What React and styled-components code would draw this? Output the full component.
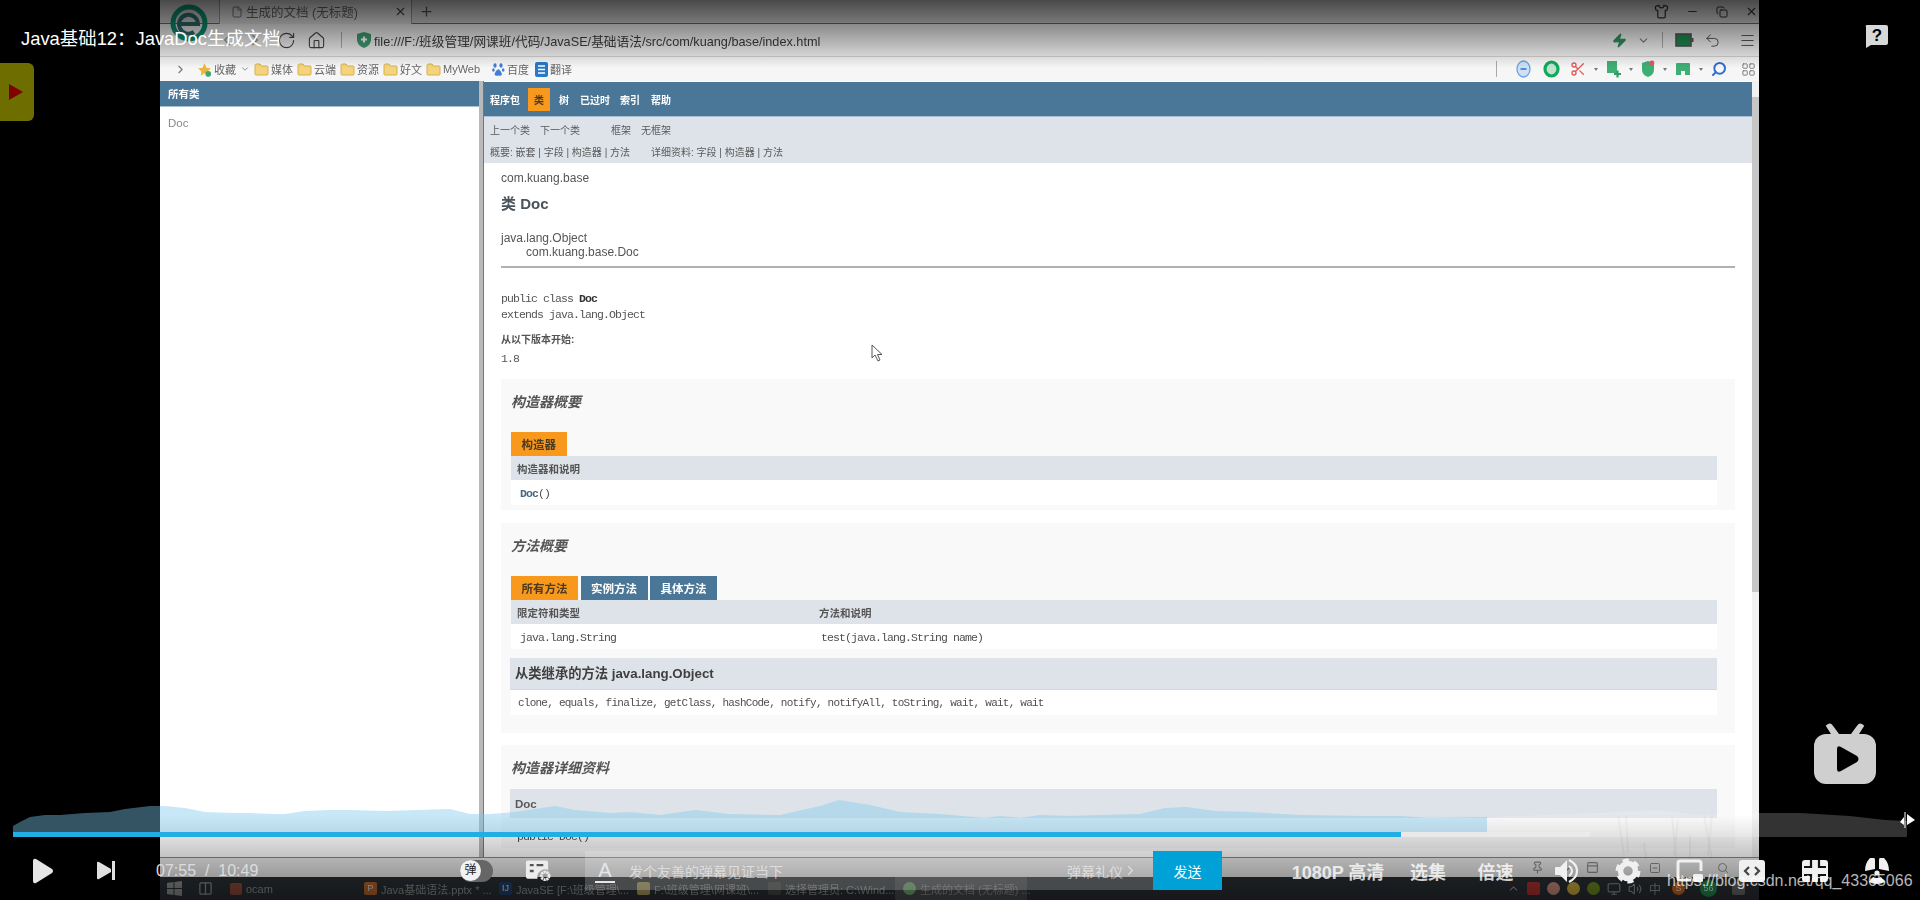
import React from 'react';
import styled, { createGlobalStyle } from 'styled-components';
import {
  File, X, Plus, RotateCw, Home, ChevronDown, ChevronLeft, ChevronRight, ChevronUp, Shirt, Minus, Copy, Zap,
  Undo2, Menu, Scissors, Search, LayoutGrid, Pin, ArrowDown, PanelTop, SquareMinus, Columns2, Volume2, Monitor,
} from 'lucide-react';

const SANS = `'Liberation Sans', 'Noto Sans CJK SC', sans-serif`;
const MONO = `'Liberation Mono', 'Noto Sans CJK SC', monospace`;

const GlobalStyle = createGlobalStyle`
  html, body { margin: 0; padding: 0; background: #000; }
  #root { width: 1920px; height: 900px; }
`;

const Page = styled.div`
  position: relative;
  width: 1920px;
  height: 900px;
  background: #000;
  overflow: hidden;
  font-family: ${SANS};
`;

const Video = styled.div`
  position: relative;
  width: 1599px;
  height: 900px;
  margin-left: 160px;
  display: flex;
  flex-direction: column;
  overflow: hidden;
  background: #fff;
  filter: blur(0.45px);
`;

const TabBar = styled.div`
  height: 24px;
  flex: none;
  display: flex;
  align-items: center;
  padding-left: 59px;
  background: #d6d6d6;
  border-bottom: 1px solid #6c6c6c;
  box-sizing: border-box;
`;

const BrowserTab = styled.div`
  width: 193px;
  height: 24px;
  box-sizing: border-box;
  display: flex;
  align-items: center;
  padding-left: 11px;
  color: #666;
  font-size: 12.5px;
  border-left: 1px solid #999;
  border-right: 1px solid #999;
  background: #e6e6e6;
  gap: 3px;
  white-space: nowrap;
  svg:last-child { margin-left: auto; margin-right: 4px; }
`;

const WindowButtons = styled.div`
  margin-left: auto;
  margin-right: 1px;
  display: flex;
  align-items: center;
  gap: 17px;
  color: #333;
`;

const AddressBar = styled.div`
  height: 32px;
  flex: none;
  display: flex;
  align-items: center;
  padding-left: 58px;
  background: #f0f0f0;
  color: #444;
`;

const UrlText = styled.span`
  margin-left: 3px;
  font-size: 12.7px;
  color: #3c3c3c;
  white-space: nowrap;
`;

const ToolDivider = styled.span`
  display: block;
  width: 1px;
  height: 16px;
  margin: 0 ${p => p.$space || 14}px;
  background: #aaa;
`;

const ToolGroup = styled.div`
  margin-left: auto;
  margin-right: 3px;
  display: flex;
  align-items: center;
  gap: ${p => p.$gap || 8}px;
`;

const ToolSlot = styled.span`
  display: flex;
  align-items: center;
  margin-left: ${p => p.$ml || 0}px;
`;

const Caret = styled.span`
  width: 0;
  height: 0;
  border-style: solid;
  border-width: 3px 2px 0 2px;
  border-color: #777 transparent transparent transparent;
`;

const BookmarkBar = styled.div`
  height: 25px;
  flex: none;
  display: flex;
  align-items: center;
  gap: 4px;
  padding-left: 14px;
  box-sizing: border-box;
  background: #f6f6f6;
  border-top: 1px solid #d0d0d0;
`;

const Bookmark = styled.span`
  display: flex;
  align-items: center;
  gap: 2px;
  font-size: 11px;
  color: #666;
  white-space: nowrap;
  margin-left: ${p => p.$ml || 0}px;
`;

const Frames = styled.div`
  flex: 1;
  min-height: 0;
  display: flex;
  background: #fff;
`;

const ListPane = styled.div`
  width: 319px;
  flex: none;
`;

const ListHeader = styled.div`
  height: 26px;
  box-sizing: border-box;
  padding-left: 8px;
  display: flex;
  align-items: center;
  background: #4a7698;
  border-bottom: 1px solid #a9c0d2;
  color: #fff;
  font-size: 10.5px;
  font-weight: 700;
`;

const ListItem = styled.div`
  padding: 10px 0 0 8px;
  font-size: 11.5px;
  color: #888;
`;

const Splitter = styled.div`
  width: 5px;
  flex: none;
  background: #b9b9b9;
  border-right: 1px solid #777;
  box-sizing: border-box;
`;

const ClassPane = styled.div`
  flex: 1;
  min-width: 0;
  display: flex;
  flex-direction: column;
  overflow: hidden;
  padding-top: 1px;
`;

const NavBar = styled.div`
  height: 35px;
  flex: none;
  display: flex;
  align-items: center;
  padding-left: 6px;
  background: #4a7698;
  border-bottom: 1px solid #a9c0d2;
  box-sizing: border-box;
  font-size: 10px;
  color: #fff;
  font-weight: 700;
`;

const NavItem = styled.span`
  height: 23px;
  display: flex;
  align-items: center;
  justify-content: center;
  margin-right: ${p => p.$mr}px;
  padding: 0 ${p => (p.$active ? 6 : 0)}px;
  background: ${p => (p.$active ? '#f8981d' : 'transparent')};
  color: ${p => (p.$active ? '#4a3a20' : '#fff')};
`;

const SubNav = styled.div`
  height: 46px;
  flex: none;
  padding: 1px 0 0 6px;
  box-sizing: border-box;
  background: #dee3e9;
  font-size: 10px;
  color: #5a5a5a;
`;

const SubLine = styled.div`
  height: 22px;
  display: flex;
  align-items: center;
  white-space: nowrap;
  span { margin-right: ${p => p.$gap}px; }
`;

const Content = styled.div`
  padding: 0 17px;
  color: #555;
`;

const PackageLabel = styled.div`
  margin-top: 7px;
  font-size: 12px;
  line-height: 16px;
`;

const ClassTitle = styled.div`
  margin-top: 8px;
  font-size: 15px;
  line-height: 20px;
  font-weight: 700;
  color: #4a545c;
`;

const InheritLine = styled.div`
  font-size: 12px;
  line-height: 14px;
  margin-top: ${p => p.$mt || 0}px;
  padding-left: ${p => p.$indent || 0}px;
`;

const Rule = styled.div`
  margin-top: 7px;
  height: 2px;
  background: #b0b0b0;
`;

const Signature = styled.div`
  margin-top: 23px;
  font-family: ${MONO};
  font-size: 11.5px;
  letter-spacing: -0.9px;
  line-height: 16px;
  b { color: #333; }
`;

const SinceLabel = styled.div`
  margin-top: 9px;
  font-size: 10px;
  line-height: 16px;
  font-weight: 700;
  color: #555;
`;

const SinceValue = styled.div`
  margin-top: 3px;
  font-family: ${MONO};
  font-size: 11.5px;
  letter-spacing: -0.9px;
  line-height: 16px;
`;

const Section = styled.div`
  margin-top: ${p => p.$mt}px;
  padding: 13px 18px 5px 10px;
  background: #f9f9f9;
`;

const SectionTitle = styled.div`
  height: 20px;
  font-size: 14px;
  line-height: 20px;
  font-style: italic;
  font-weight: 700;
  color: #555;
`;

const TabRow = styled.div`
  display: flex;
  gap: 2.5px;
  margin-top: 20px;
`;

const TableTab = styled.div`
  height: 24px;
  padding: 0 10.5px;
  display: flex;
  align-items: center;
  font-size: 11.5px;
  font-weight: 700;
  background: ${p => (p.$active ? '#f8981d' : '#4a7698')};
  color: ${p => (p.$active ? '#4a3a20' : '#fff')};
`;

const TableHead = styled.div`
  height: 24px;
  padding: 1px 0 0 6px;
  box-sizing: border-box;
  display: grid;
  grid-template-columns: 302px 1fr;
  align-items: center;
  background: #dee3e9;
  font-size: 10.5px;
  font-weight: 700;
  color: #555;
`;

const TableRow = styled.div`
  height: 25px;
  padding: 2px 0 0 9px;
  box-sizing: border-box;
  display: grid;
  grid-template-columns: 301px 1fr;
  align-items: center;
  background: #fff;
  font-family: ${MONO};
  font-size: 11.5px;
  letter-spacing: -0.9px;
  color: #4f4f4f;
  b { color: #4a6782; }
`;

const InheritedHead = styled.div`
  height: 32px;
  margin: 9px 0 0 -1px;
  padding: 0 0 2px 5px;
  display: flex;
  align-items: center;
  background: #dee3e9;
  border-bottom: 1px solid #d0d9e0;
  box-sizing: border-box;
  font-size: 13.3px;
  font-weight: 700;
  color: #3f3f3f;
`;

const InheritedRow = styled.div`
  height: 25px;
  margin-bottom: 13px;
  padding-left: 7px;
  display: flex;
  align-items: center;
  background: #fff;
  font-family: ${MONO};
  font-size: 11px;
  letter-spacing: -0.76px;
  white-space: pre;
  color: #4f4f4f;
`;

const DetailHead = styled.div`
  height: 29px;
  margin: 11px 0 0 -1px;
  padding-left: 5px;
  display: flex;
  align-items: center;
  background: #dee3e9;
  font-size: 11.5px;
  font-weight: 700;
  color: #5a5a5a;
`;

const DetailCode = styled.div`
  margin-top: 12px;
  padding-left: 6px;
  font-family: ${MONO};
  font-size: 11.5px;
  letter-spacing: -0.9px;
  color: #4f4f4f;
`;

const ScrollTrack = styled.div`
  width: 7px;
  flex: none;
  background: #f1f1f1;
  display: flex;
  flex-direction: column;
`;

const ScrollThumb = styled.div`
  margin-top: 16px;
  height: 495px;
  background: #c6c6c6;
`;

const StatusBar = styled.div`
  height: 20px;
  flex: none;
  display: flex;
  align-items: center;
  justify-content: flex-end;
  gap: 14px;
  padding-right: 30px;
  background: #ededed;
  border-top: 1px solid #8a8a8a;
  box-sizing: border-box;
  color: #8c8c8c;
`;

const Taskbar = styled.div`
  height: 23px;
  flex: none;
  display: flex;
  align-items: center;
  background: #2a2f33;
  color: #8d8d8d;
  font-size: 11px;
  position: relative;
`;

const TaskItem = styled.div`
  width: ${p => p.$w}px;
  height: 23px;
  flex: none;
  display: flex;
  align-items: center;
  gap: 4px;
  padding-left: ${p => p.$pl || 0}px;
  box-sizing: border-box;
  white-space: nowrap;
  background: ${p => (p.$active ? 'rgba(255,255,255,0.13)' : 'transparent')};
`;

const TaskIcon = styled.span`
  width: ${p => p.$size || 13}px;
  height: ${p => p.$size || 13}px;
  flex: none;
  display: flex;
  align-items: center;
  justify-content: center;
  margin-left: ${p => p.$ml || 0}px;
  font-size: 9px;
  line-height: 1;
  color: #ddd;
  border-radius: ${p => (p.$round ? '50%' : '2px')};
  background: ${p => p.$color};
`;

const Tray = styled.div`
  margin-left: auto;
  margin-right: 14px;
  display: flex;
  align-items: center;
  gap: 7px;
  font-size: 12px;
`;

const LogoMark = styled.svg`
  position: absolute;
  left: 10px;
  top: 4px;
  width: 38px;
  height: 46px;
`;

const MouseCursor = styled.svg`
  position: absolute;
  left: 711px;
  top: 344px;
`;

const Streaks = styled.svg`
  position: absolute;
  left: 1440px;
  top: 815px;
`;

const TopShade = styled.div`
  position: absolute;
  left: 0;
  top: 0;
  width: 100%;
  height: 68px;
  background: linear-gradient(to bottom, rgba(0,0,0,0.66), rgba(0,0,0,0));
  pointer-events: none;
`;

const BottomShade = styled.div`
  position: absolute;
  left: 0;
  bottom: 0;
  width: 100%;
  height: 85px;
  background: linear-gradient(to bottom, rgba(0,0,0,0), rgba(0,0,0,0.48));
  pointer-events: none;
`;

const VideoTitle = styled.div`
  position: absolute;
  left: 21px;
  top: 27px;
  font-size: 18.4px;
  line-height: 24px;
  color: #fff;
  white-space: nowrap;
`;

const SideTab = styled.div`
  position: absolute;
  left: 0;
  top: 63px;
  width: 34px;
  height: 58px;
  display: flex;
  align-items: center;
  justify-content: center;
  background: #6e6e00;
  border-radius: 0 6px 6px 0;
`;

const SideArrow = styled.span`
  width: 0;
  height: 0;
  margin-left: -3px;
  border-style: solid;
  border-width: 8px 0 8px 14px;
  border-color: transparent transparent transparent #800000;
`;

const HelpBadge = styled.svg`
  position: absolute;
  left: 1864px;
  top: 24px;
`;

const TvLogo = styled.svg`
  position: absolute;
  left: 1813px;
  top: 723px;
`;

const Wave = styled.svg`
  position: absolute;
  left: 0;
  top: 790px;
`;

const ProgressTrack = styled.div`
  position: absolute;
  left: 13px;
  top: 832px;
  width: 1577px;
  height: 5px;
  background: rgba(235, 235, 235, 0.85);
`;

const ProgressFill = styled.div`
  height: 100%;
  background: #23ade5;
`;

const Controls = styled.div`
  position: absolute;
  left: 0;
  top: 851px;
  width: 1920px;
  height: 39px;
  display: flex;
  align-items: center;
`;

const Control = styled.div`
  width: ${p => p.$w}px;
  flex: none;
  margin-left: ${p => p.$ml}px;
  display: flex;
  align-items: center;
  justify-content: center;
  white-space: nowrap;
  color: #e4e4e4;
`;

const TimeLabel = styled.span`
  margin-left: 41px;
  width: 98px;
  flex: none;
  font-size: 16px;
  color: #dcdcdc;
  white-space: pre;
`;

const DanmakuToggle = styled.div`
  margin-left: 206px;
  width: 33px;
  height: 22px;
  flex: none;
  border-radius: 11px;
  background: #666;
  display: flex;
  align-items: center;
`;

const ToggleKnob = styled.span`
  width: 21px;
  height: 21px;
  border-radius: 50%;
  background: #f2f2f2;
  color: #222;
  font-size: 12px;
  line-height: 21px;
  text-align: center;
`;

const DanmakuInput = styled.div`
  margin-left: 34px;
  width: 568px;
  height: 39px;
  flex: none;
  box-sizing: border-box;
  padding: 0 15px 0 10px;
  display: flex;
  align-items: center;
  background: rgba(255, 255, 255, 0.2);
  color: rgba(255, 255, 255, 0.55);
  font-size: 14px;
`;

const FontMark = styled.span`
  width: 20px;
  margin-right: 14px;
  border-bottom: 2px solid #e6e6e6;
  color: #e6e6e6;
  font-size: 20px;
  line-height: 22px;
  text-align: center;
`;

const EtiquetteLink = styled.span`
  margin-left: auto;
  display: flex;
  align-items: center;
`;

const SendButton = styled.div`
  width: 69px;
  height: 39px;
  flex: none;
  display: flex;
  align-items: center;
  justify-content: center;
  background: #00a1d6;
  color: #fff;
  font-size: 14px;
`;

const QualityText = styled.span`
  font-size: 18px;
  font-weight: 700;
  color: rgba(255, 255, 255, 0.8);
`;

const Watermark = styled.div`
  position: absolute;
  left: 1667px;
  top: 871px;
  font-size: 16px;
  line-height: 20px;
  color: rgba(255, 255, 255, 0.72);
  white-space: nowrap;
`;

const Folder = () => (
  <svg width="15" height="13" viewBox="0 0 15 13">
    <path d="M1 2.5 Q1 1 2.5 1 H6 L7.5 3 H13 Q14 3 14 4 V11 Q14 12 13 12 H2 Q1 12 1 11 Z" fill="#f3d47c" stroke="#d8b04e" />
  </svg>
);

const WAVE_TOP = [
  [13, 826], [20, 822], [30, 817], [45, 815], [60, 815], [85, 813], [110, 812], [125, 809], [150, 806], [165, 806],
  [185, 808], [205, 812], [235, 813], [250, 813], [275, 814], [285, 814], [305, 811], [330, 810], [350, 810], [385, 811],
  [450, 809], [470, 814], [490, 814], [515, 812], [555, 806], [575, 810], [610, 813], [630, 812], [660, 815], [695, 810],
  [730, 814], [780, 815], [820, 806], [839, 800], [870, 805], [900, 812], [940, 814], [985, 818], [1000, 816], [1020, 818],
  [1040, 815], [1070, 816], [1100, 815], [1140, 814], [1165, 808], [1186, 807], [1215, 811], [1250, 812], [1300, 815],
  [1360, 816], [1401, 816], [1430, 818], [1487, 817],
];
const WAVE_REST = [
  [1487, 817], [1600, 813], [1658, 810], [1700, 815], [1760, 813], [1800, 813], [1850, 816], [1885, 820], [1907, 821],
];
const toPoints = (top, floor) => {
  const last = top[top.length - 1][0];
  const first = top[0][0];
  return [[first, floor], ...top, [last, floor]].map(([x, y]) => `${x},${y - 790}`).join(' ');
};

const TASKS = [
  { w: 135, color: '#b5652a', mark: 'P', label: 'Java基础语法.pptx * ...' },
  { w: 138, color: '#20406e', mark: 'IJ', label: 'JavaSE [F:\\班级管理\\...' },
  { w: 131, color: '#a89a5c', mark: '', label: 'F:\\班级管理\\网课班\\...' },
  { w: 127, color: '#444', mark: '', label: '选择管理员: C:\\Wind...' },
];

export default function App() {
  return (
    <Page>
      <GlobalStyle />
      <Video>
        <TabBar>
          <BrowserTab>
            <File size={12} color="#777" />
            生成的文档 (无标题)
            <X size={13} color="#444" />
          </BrowserTab>
          <Plus size={15} color="#555" style={{ marginLeft: 7 }} />
          <WindowButtons>
            <Shirt size={15} />
            <Minus size={13} />
            <Copy size={12} />
            <X size={13} />
          </WindowButtons>
        </TabBar>
        <AddressBar>
          <ChevronLeft size={18} color="#999" />
          <ChevronRight size={18} color="#999" style={{ marginLeft: 10 }} />
          <RotateCw size={19} strokeWidth={1.4} style={{ marginLeft: 13 }} />
          <Home size={19} strokeWidth={1.4} style={{ marginLeft: 11 }} />
          <ToolDivider $space={15} />
          <svg width="14" height="16" viewBox="0 0 14 16">
            <path d="M7 0 L14 2 V8 Q14 13 7 16 Q0 13 0 8 V2 Z" fill="#3f9c72" />
            <path d="M4 7.5 H10 M7 4.5 V10.5" stroke="#fff" strokeWidth="2" />
          </svg>
          <UrlText>file:///F:/班级管理/网课班/代码/JavaSE/基础语法/src/com/kuang/base/index.html</UrlText>
          <ToolGroup $gap={10}>
            <Zap size={15} color="#2f8f5f" fill="#2f8f5f" />
            <ChevronDown size={13} color="#777" />
            <ToolDivider $space={2} />
            <svg width="19" height="14" viewBox="0 0 19 14">
              <rect x="1" y="1" width="15" height="12" fill="#1c8a4c" stroke="#555" strokeWidth="1.6" />
              <rect x="16.5" y="5" width="2" height="4" fill="#555" />
            </svg>
            <Undo2 size={17} color="#555" strokeWidth={1.4} />
            <ToolSlot $ml={8}>
              <Menu size={17} color="#555" strokeWidth={1.4} />
            </ToolSlot>
          </ToolGroup>
        </AddressBar>
        <BookmarkBar>
          <ChevronRight size={13} color="#777" />
          <Bookmark $ml={6}>
            <svg width="15" height="15" viewBox="0 0 24 24">
              <path d="M12 2 L15 9 L22 10 L17 15 L18 22 L12 18 L6 22 L7 15 L2 10 L9 9 Z" fill="#e8b93c" />
              <circle cx="18" cy="19" r="4.5" fill="#42a66b" />
            </svg>
            收藏
            <ChevronDown size={10} color="#777" style={{ marginLeft: 2 }} />
          </Bookmark>
          <Bookmark><Folder />媒体</Bookmark>
          <Bookmark><Folder />云端</Bookmark>
          <Bookmark><Folder />资源</Bookmark>
          <Bookmark><Folder />好文</Bookmark>
          <Bookmark><Folder />MyWeb</Bookmark>
          <Bookmark $ml={8}>
            <svg width="13" height="15" viewBox="0 0 13 15" fill="#3f7fd6">
              <ellipse cx="3" cy="3.5" rx="1.6" ry="2.3" />
              <ellipse cx="9" cy="3.5" rx="1.6" ry="2.3" />
              <ellipse cx="1.4" cy="8" rx="1.3" ry="1.8" />
              <ellipse cx="11.2" cy="8" rx="1.3" ry="1.8" />
              <path d="M6.3 7 Q9.5 9 10 12 Q10 14.5 6.3 13.5 Q2.5 14.5 2.5 12 Q3 9 6.3 7 Z" />
            </svg>
            百度
          </Bookmark>
          <Bookmark $ml={2}>
            <svg width="13" height="15" viewBox="0 0 13 15">
              <rect width="13" height="15" rx="2" fill="#2a78c8" />
              <path d="M3 4 H10 M3 7.5 H10 M3 11 H10" stroke="#fff" strokeWidth="1.3" />
            </svg>
            翻译
          </Bookmark>
          <ToolGroup $gap={8}>
            <ToolDivider $space={5} />
            <ToolSlot $ml={6}>
              <svg width="15" height="18" viewBox="0 0 15 18">
                <ellipse cx="7.5" cy="9" rx="6.5" ry="8" fill="#cfe0f5" stroke="#6ba4e0" strokeWidth="1.3" />
                <path d="M4.5 9 H10.5" stroke="#4f8fd8" strokeWidth="2" />
              </svg>
            </ToolSlot>
            <ToolSlot $ml={4}>
              <svg width="17" height="18" viewBox="0 0 17 18">
                <ellipse cx="8.5" cy="9" rx="6.5" ry="7" fill="#bfe3cf" stroke="#12a85e" strokeWidth="3.2" />
              </svg>
            </ToolSlot>
            <ToolSlot $ml={2}>
              <Scissors size={16} color="#e25b5b" />
            </ToolSlot>
            <Caret />
            <svg width="15" height="18" viewBox="0 0 15 18">
              <rect x="1" y="1" width="10" height="12" fill="#3fae74" />
              <path d="M8 14 H15 M11.5 10.5 V17.5" stroke="#2e9e64" strokeWidth="2.2" />
            </svg>
            <Caret />
            <svg width="14" height="18" viewBox="0 0 14 18">
              <path d="M1 3 L7 1 L13 3 V10 Q13 15 7 17 Q1 15 1 10 Z" fill="#3fae74" />
              <circle cx="11" cy="3" r="2.4" fill="#e25b5b" />
            </svg>
            <Caret />
            <svg width="16" height="16" viewBox="0 0 16 16">
              <path d="M2 2 H14 Q15 2 15 3 V14 H10 V10 H6 V14 H1 V3 Q1 2 2 2 Z" fill="#3fae74" />
            </svg>
            <Caret />
            <Search size={16} color="#2f6fd0" strokeWidth={3} style={{ transform: 'scaleX(-1)' }} />
            <ToolSlot $ml={6}>
              <LayoutGrid size={15} color="#777" strokeWidth={1.5} />
            </ToolSlot>
          </ToolGroup>
        </BookmarkBar>
        <Frames>
          <ListPane>
            <ListHeader>所有类</ListHeader>
            <ListItem>Doc</ListItem>
          </ListPane>
          <Splitter />
          <ClassPane>
            <NavBar>
              <NavItem $mr={8}>程序包</NavItem>
              <NavItem $active $mr={9}>类</NavItem>
              <NavItem $mr={11}>树</NavItem>
              <NavItem $mr={10}>已过时</NavItem>
              <NavItem $mr={11}>索引</NavItem>
              <NavItem $mr={0}>帮助</NavItem>
            </NavBar>
            <SubNav>
              <SubLine $gap={10}>
                <span>上一个类</span>
                <span style={{ marginRight: 31 }}>下一个类</span>
                <span>框架</span>
                <span>无框架</span>
              </SubLine>
              <SubLine $gap={21}>
                <span>概要: 嵌套 | 字段 | 构造器 | 方法</span>
                <span>详细资料: 字段 | 构造器 | 方法</span>
              </SubLine>
            </SubNav>
            <Content>
              <PackageLabel>com.kuang.base</PackageLabel>
              <ClassTitle>类 Doc</ClassTitle>
              <InheritLine $mt={17}>java.lang.Object</InheritLine>
              <InheritLine $indent={25}>com.kuang.base.Doc</InheritLine>
              <Rule />
              <Signature>
                public class <b>Doc</b>
                <br />
                extends java.lang.Object
              </Signature>
              <SinceLabel>从以下版本开始:</SinceLabel>
              <SinceValue>1.8</SinceValue>
              <Section $mt={12}>
                <SectionTitle>构造器概要</SectionTitle>
                <TabRow>
                  <TableTab $active>构造器</TableTab>
                </TabRow>
                <TableHead><span>构造器和说明</span></TableHead>
                <TableRow><span><b>Doc</b>()</span></TableRow>
              </Section>
              <Section $mt={13}>
                <SectionTitle>方法概要</SectionTitle>
                <TabRow>
                  <TableTab $active>所有方法</TableTab>
                  <TableTab>实例方法</TableTab>
                  <TableTab>具体方法</TableTab>
                </TabRow>
                <TableHead>
                  <span>限定符和类型</span>
                  <span>方法和说明</span>
                </TableHead>
                <TableRow>
                  <span>java.lang.String</span>
                  <span>test(java.lang.String name)</span>
                </TableRow>
                <InheritedHead>从类继承的方法 java.lang.Object</InheritedHead>
                <InheritedRow>clone, equals, finalize, getClass, hashCode, notify, notifyAll, toString, wait, wait, wait</InheritedRow>
              </Section>
              <Section $mt={12}>
                <SectionTitle>构造器详细资料</SectionTitle>
                <DetailHead>Doc</DetailHead>
                <DetailCode>public Doc()</DetailCode>
              </Section>
            </Content>
          </ClassPane>
          <ScrollTrack>
            <ScrollThumb />
          </ScrollTrack>
        </Frames>
        <StatusBar>
          <Pin size={13} />
          <ArrowDown size={14} />
          <PanelTop size={13} />
          <SquareMinus size={12} style={{ marginLeft: 36 }} />
          <Search size={12} style={{ marginLeft: 42 }} />
        </StatusBar>
        <Taskbar>
          <TaskItem $w={38} $pl={7}>
            <svg width="15" height="15" viewBox="0 0 15 15" fill="#8d8d8d">
              <path d="M0 2 L6.5 1 V7 H0 Z M7.5 1 L15 0 V7 H7.5 Z M0 8 H6.5 V14 L0 13 Z M7.5 8 H15 V15 L7.5 14 Z" />
            </svg>
          </TaskItem>
          <TaskItem $w={32}>
            <Columns2 size={15} />
          </TaskItem>
          <TaskItem $w={134}>
            <TaskIcon $color="#8a4a3a" $size={12} />
            ocam
          </TaskItem>
          {TASKS.map(t => (
            <TaskItem key={t.label} $w={t.w}>
              <TaskIcon $color={t.color}>{t.mark}</TaskIcon>
              {t.label}
            </TaskItem>
          ))}
          <TaskItem $w={132} $pl={8} $active>
            <TaskIcon $color="#6fa86a" $round />
            生成的文档 (无标题) ...
          </TaskItem>
          <Tray>
            <ChevronUp size={13} />
            <TaskIcon $color="#b03030" />
            <TaskIcon $color="#c98a7a" $round />
            <TaskIcon $color="#c9a83c" $round />
            <TaskIcon $color="#6a8a20" $round />
            <Monitor size={14} />
            <Volume2 size={14} />
            <span>中</span>
            <TaskIcon $color="#c8641e" $round $ml={4}>S</TaskIcon>
            <TaskIcon $color="#1f8a4c" $round $size={17} $ml={8}>56</TaskIcon>
            <TaskIcon $color="#666" $ml={8} />
          </Tray>
        </Taskbar>
        <LogoMark viewBox="0 0 38 46">
          <circle cx="19" cy="19" r="16" fill="none" stroke="#0d9070" strokeWidth="5" />
          <path d="M9 20 H28 A9.5 9.5 0 1 0 24 28" fill="none" stroke="#2c6c6c" strokeWidth="4" />
        </LogoMark>
        <MouseCursor width="13" height="18" viewBox="0 0 13 18">
          <path d="M1 1 V14 L4 11 L7 17 L9 16 L6.5 10.5 H11 Z" fill="#fff" stroke="#555" strokeWidth="1" />
        </MouseCursor>
        <Streaks width="150" height="45" viewBox="0 0 150 45" stroke="#777" opacity="0.07">
          <path d="M18 0 L24 40 M26 0 L28 38 M72 2 L76 42 M78 4 L74 40 M104 0 L112 44 M112 0 L108 40 M44 28 L46 44 M90 20 L90 44" strokeWidth="2" fill="none" />
        </Streaks>
      </Video>
      <TopShade />
      <BottomShade />
      <VideoTitle>Java基础12：JavaDoc生成文档</VideoTitle>
      <SideTab><SideArrow /></SideTab>
      <HelpBadge width="25" height="25" viewBox="0 0 25 25">
        <path d="M3 1 H22 Q24 1 24 3 V19 Q24 21 22 21 H7 L2 24 V3 Q1 1 3 1 Z" fill="#d8d8d8" />
        <text x="13" y="17" textAnchor="middle" fontFamily="Liberation Sans" fontWeight="700" fontSize="17" fill="#000">?</text>
      </HelpBadge>
      <TvLogo width="64" height="62" viewBox="0 0 64 62">
        <path d="M21 14 L14 3 Q17 0 19 3 L27 14 M43 14 L50 3 Q47 0 45 3 L37 14" fill="#cfcfcf" stroke="#cfcfcf" strokeWidth="2" />
        <rect x="1" y="11" width="62" height="50" rx="12" fill="#cfcfcf" />
        <path d="M24 26 Q24 22 28 24 L44 33 Q47 36 44 39 L28 48 Q24 50 24 46 Z" fill="#000" />
      </TvLogo>
      <Wave width="1920" height="48" viewBox="0 0 1920 48">
        <polygon points={toPoints(WAVE_TOP, 832)} fill="rgba(125,200,235,0.42)" />
        <polygon points={toPoints(WAVE_REST, 837)} fill="rgba(255,255,255,0.2)" />
        <path d="M1905 22 V38" stroke="#fff" strokeWidth="1" />
        <path d="M1907 24 L1915 30 L1907 35 Z M1904 27 L1900 32 L1904 35 Z" fill="#fff" />
      </Wave>
      <ProgressTrack>
        <ProgressFill style={{ width: `${(1388 / 1577) * 100}%` }} />
      </ProgressTrack>
      <Controls>
        <Control $w={22} $ml={32}>
          <svg width="22" height="26" viewBox="0 0 22 26">
            <path d="M1 3 Q1 0 4 1 L20 11 Q22 13 20 15 L4 25 Q1 26 1 23 Z" fill="#e6e6e6" />
          </svg>
        </Control>
        <Control $w={18} $ml={43}>
          <svg width="18" height="19" viewBox="0 0 18 19">
            <path d="M0 2 Q0 0 2 1 L14 8 V11 L2 18 Q0 19 0 17 Z" fill="#e0e0e0" />
            <rect x="15" y="0" width="3" height="19" fill="#e0e0e0" />
          </svg>
        </Control>
        <TimeLabel>07:55  /  10:49</TimeLabel>
        <DanmakuToggle>
          <ToggleKnob>弹</ToggleKnob>
        </DanmakuToggle>
        <Control $w={26} $ml={32}>
          <svg width="27" height="23" viewBox="0 0 27 23">
            <path d="M3 1 H22 Q24 1 24 3 V11 A8 8 0 0 0 13 20 H3 Q1 20 1 18 V3 Q1 1 3 1 Z" fill="#ececec" />
            <path d="M5 6 H9 M12 6 H19 M5 12 H9" stroke="#555" strokeWidth="2.4" />
            <circle cx="21" cy="17" r="4" fill="none" stroke="#ececec" strokeWidth="3" strokeDasharray="2.2 0.6" />
          </svg>
        </Control>
        <DanmakuInput>
          <FontMark>A</FontMark>
          发个友善的弹幕见证当下
          <EtiquetteLink>
            弹幕礼仪
            <ChevronRight size={15} />
          </EtiquetteLink>
        </DanmakuInput>
        <SendButton>发送</SendButton>
        <Control $w={94} $ml={69}><QualityText>1080P 高清</QualityText></Control>
        <Control $w={38} $ml={24}><QualityText>选集</QualityText></Control>
        <Control $w={37} $ml={30}><QualityText>倍速</QualityText></Control>
        <Control $w={24} $ml={40}>
          <svg width="24" height="24" viewBox="0 0 24 24">
            <path d="M1 9 Q1 8 2 8 H6 L13 1 V23 L6 16 H2 Q1 16 1 15 Z" fill="#f0f0f0" />
            <path d="M15 1 Q23 5 23 12 Q23 19 15 23" fill="none" stroke="#f0f0f0" strokeWidth="2.2" />
            <path d="M15 7 Q18 9 18 12 Q18 15 15 17" fill="none" stroke="#f0f0f0" strokeWidth="2" />
          </svg>
        </Control>
        <Control $w={26} $ml={37}>
          <svg width="26" height="26" viewBox="0 0 26 26">
            <circle cx="13" cy="13" r="7.5" fill="none" stroke="#f0f0f0" strokeWidth="5.5" />
            <circle cx="13" cy="13" r="10.5" fill="none" stroke="#f0f0f0" strokeWidth="4" strokeDasharray="6 5" />
          </svg>
        </Control>
        <Control $w={28} $ml={35}>
          <svg width="28" height="24" viewBox="0 0 28 24">
            <path d="M15 21 H4 Q2 21 2 19 V4 Q2 2 4 2 H23 Q25 2 25 4 V12" fill="none" stroke="#f0f0f0" strokeWidth="3" />
            <rect x="17" y="15" width="10" height="8" rx="1.5" fill="#f0f0f0" />
          </svg>
        </Control>
        <Control $w={26} $ml={35}>
          <svg width="26" height="22" viewBox="0 0 26 22">
            <rect width="26" height="22" rx="3" fill="#f0f0f0" />
            <path d="M10 7 L6 11 L10 15 M16 7 L20 11 L16 15" fill="none" stroke="#444" strokeWidth="2.2" />
          </svg>
        </Control>
        <Control $w={26} $ml={37}>
          <svg width="26" height="22" viewBox="0 0 26 22">
            <rect width="26" height="22" rx="3" fill="#f0f0f0" />
            <path d="M9 0 V7 L2 7 M17 0 V7 L24 7 M9 22 V15 L2 15 M17 22 V15 L24 15" fill="none" stroke="#111" strokeWidth="2.2" />
          </svg>
        </Control>
        <Control $w={28} $ml={35}>
          <svg width="26" height="26" viewBox="0 0 26 26" fill="#f0f0f0">
            <path d="M6 0 L10 0 Q11 0 11 2 V11 L1 13 Q1 5 6 0 Z" />
            <path d="M20 0 L16 0 Q15 0 15 2 V11 L25 13 Q25 5 20 0 Z" />
            <circle cx="13" cy="15" r="2.6" />
            <path d="M9 19 Q13 21 17 19 L21 24 Q13 28 5 24 Z" />
          </svg>
        </Control>
      </Controls>
      <Watermark>https://blog.csdn.net/qq_43365066</Watermark>
    </Page>
  );
}
